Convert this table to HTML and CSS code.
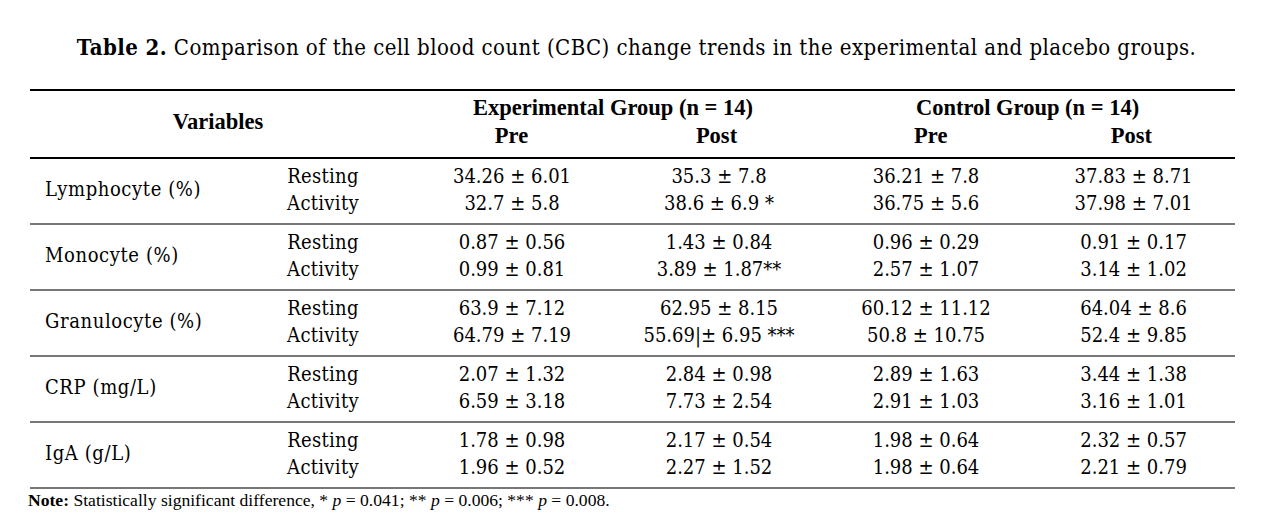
FILE: index.html
```html
<!DOCTYPE html>
<html>
<head>
<meta charset="utf-8">
<link rel="stylesheet" href="styles.css">
</head>
<body>
<div class="page">
  <h1 class="title"><b>Table 2.</b> Comparison of the cell blood count (CBC) change trends in the experimental and placebo groups.</h1>
  <table class="cbc">
    <colgroup>
      <col class="c-a"><col class="c-b"><col class="c-c"><col class="c-d"><col class="c-e"><col class="c-f">
    </colgroup>
    <thead>
      <tr>
        <th colspan="2" class="h-var">Variables</th>
        <th colspan="2" class="h-grp">
          <div class="grp-name">Experimental Group (n = 14)</div>
          <div class="sub"><span class="sub-l">Pre</span><span class="sub-r">Post</span></div>
        </th>
        <th colspan="2" class="h-grp">
          <div class="grp-name">Control Group (n = 14)</div>
          <div class="sub ctrl"><span class="sub-l">Pre</span><span class="sub-r">Post</span></div>
        </th>
      </tr>
    </thead>
    <tbody>
      <tr>
        <td class="lbl">Lymphocyte (%)</td>
        <td class="cond"><div>Resting</div><div>Activity</div></td>
        <td class="val"><div>34.26 ± 6.01</div><div>32.7 ± 5.8</div></td>
        <td class="val"><div>35.3 ± 7.8</div><div>38.6 ± 6.9 *</div></td>
        <td class="val"><div>36.21 ± 7.8</div><div>36.75 ± 5.6</div></td>
        <td class="val"><div>37.83 ± 8.71</div><div>37.98 ± 7.01</div></td>
      </tr>
      <tr>
        <td class="lbl">Monocyte (%)</td>
        <td class="cond"><div>Resting</div><div>Activity</div></td>
        <td class="val"><div>0.87 ± 0.56</div><div>0.99 ± 0.81</div></td>
        <td class="val"><div>1.43 ± 0.84</div><div>3.89 ± 1.87**</div></td>
        <td class="val"><div>0.96 ± 0.29</div><div>2.57 ± 1.07</div></td>
        <td class="val"><div>0.91 ± 0.17</div><div>3.14 ± 1.02</div></td>
      </tr>
      <tr>
        <td class="lbl">Granulocyte (%)</td>
        <td class="cond"><div>Resting</div><div>Activity</div></td>
        <td class="val"><div>63.9 ± 7.12</div><div>64.79 ± 7.19</div></td>
        <td class="val"><div>62.95 ± 8.15</div><div>55.69<span class="caret">|</span>± 6.95 ***</div></td>
        <td class="val"><div>60.12 ± 11.12</div><div>50.8 ± 10.75</div></td>
        <td class="val"><div>64.04 ± 8.6</div><div>52.4 ± 9.85</div></td>
      </tr>
      <tr>
        <td class="lbl">CRP (mg/L)</td>
        <td class="cond"><div>Resting</div><div>Activity</div></td>
        <td class="val"><div>2.07 ± 1.32</div><div>6.59 ± 3.18</div></td>
        <td class="val"><div>2.84 ± 0.98</div><div>7.73 ± 2.54</div></td>
        <td class="val"><div>2.89 ± 1.63</div><div>2.91 ± 1.03</div></td>
        <td class="val"><div>3.44 ± 1.38</div><div>3.16 ± 1.01</div></td>
      </tr>
      <tr>
        <td class="lbl">IgA (g/L)</td>
        <td class="cond"><div>Resting</div><div>Activity</div></td>
        <td class="val"><div>1.78 ± 0.98</div><div>1.96 ± 0.52</div></td>
        <td class="val"><div>2.17 ± 0.54</div><div>2.27 ± 1.52</div></td>
        <td class="val"><div>1.98 ± 0.64</div><div>1.98 ± 0.64</div></td>
        <td class="val"><div>2.32 ± 0.57</div><div>2.21 ± 0.79</div></td>
      </tr>
    </tbody>
  </table>
  <p class="note"><b>Note:</b> Statistically significant difference, * <i>p</i> = 0.041; ** <i>p</i> = 0.006; *** <i>p</i> = 0.008.</p>
</div>
</body>
</html>
```

FILE: styles.css
```css
html, body {
  margin: 0;
  padding: 0;
  background: #fff;
}
.page {
  width: 1267px;
  color: #000;
  font-family: "DejaVu Serif Condensed", "DejaVu Serif", serif;
}
.title {
  margin: 0;
  padding-top: 34px;
  height: 55px;
  box-sizing: border-box;
  font-size: 22px;
  letter-spacing: 0.44px;
  font-weight: normal;
  line-height: 26px;
  text-align: center;
  padding-left: 6px;
}
.title b {
  font-weight: bold;
}
.cbc {
  margin-left: 30px;
  margin-top: 34px;
  width: 1205px;
  border-collapse: collapse;
  table-layout: fixed;
  border-top: 2px solid #000;
}
.c-a { width: 210px; }
.c-b { width: 166px; }
.c-c { width: 212px; }
.c-d { width: 202px; }
.c-e { width: 212px; }
.c-f { width: 203px; }
.cbc th {
  font-family: "Liberation Serif", serif;
  font-weight: bold;
  font-size: 22.5px;
  line-height: 28px;
  padding: 3px 0 7px;
  vertical-align: middle;
  border-bottom: 2px solid #000;
}
.h-var {
  text-align: center;
}
.grp-name {
  text-align: center;
}
.sub {
  display: grid;
  grid-template-columns: 1fr 1fr;
}
.sub span {
  text-align: center;
}
.sub-l {
  padding-left: 4px;
}
.ctrl .sub-l {
  padding-left: 14px;
}
.cbc td {
  font-size: 20px;
  line-height: 27px;
  height: 66px;
  padding: 2px 0 5px;
  box-sizing: border-box;
  vertical-align: middle;
  border-bottom: 2px solid #777;
  text-align: center;
  white-space: nowrap;
}
.cbc td.lbl {
  text-align: left;
  padding-left: 15px;
  letter-spacing: 0.6px;
}
.cbc td.cond {
  letter-spacing: 0.3px;
}
.note {
  margin: 0;
  padding: 1px 0 0 28px;
  font-family: "Liberation Serif", serif;
  font-size: 17.6px;
  line-height: 20px;
}
```
